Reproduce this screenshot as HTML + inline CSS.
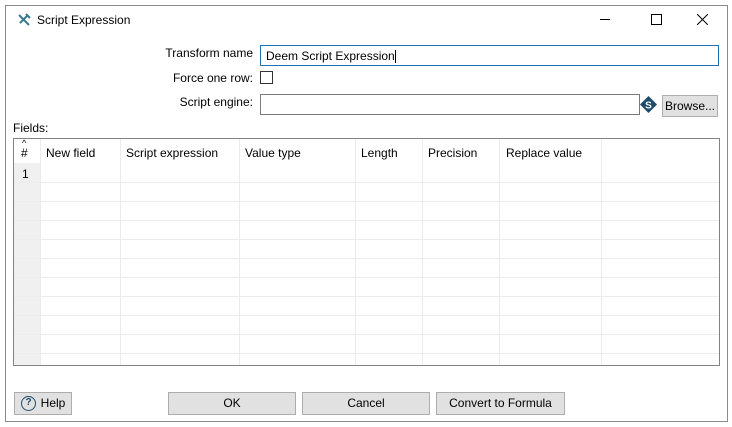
<!DOCTYPE html>
<html><head><style>
*{margin:0;padding:0;box-sizing:border-box}
body{width:732px;height:427px;background:#fff;font-family:"Liberation Sans",sans-serif;font-size:12px;color:#000;position:relative;overflow:hidden}
.a{position:absolute}
.win{left:5px;top:5px;width:723px;height:417px;border:1px solid #8a8a8a;background:#fff}
.lbl{text-align:right;white-space:nowrap}
.btn{background:#e1e1e1;border:1px solid #adadad;text-align:center;line-height:20px;font-size:12px}
.vl{width:1px;background:#ececec}
.hl{height:1px;background:#ececec}
</style></head><body>
<div class="a win"></div>
<svg class="a" style="left:17px;top:13px" width="14" height="14" viewBox="0 0 14 14"><path d="M2 2 L12 12 M11 2 L3 10" stroke="#3a7a8a" stroke-width="2"/><path d="M9 1 L13 5" stroke="#3a7a8a" stroke-width="2"/></svg>
<div class="a" style="left:37px;top:13px;font-size:12px">Script Expression</div>
<div class="a" style="left:600px;top:19px;width:10px;height:1px;background:#000"></div>
<div class="a" style="left:651px;top:14px;width:11px;height:11px;border:1px solid #000"></div>
<svg class="a" style="left:697px;top:14px" width="11" height="11"><path d="M0 0L11 11M11 0L0 11" stroke="#000" stroke-width="1"/></svg>
<div class="a lbl" style="right:479px;top:46px">Transform name</div>
<div class="a" style="left:260px;top:45px;width:459px;height:21px;border:1px solid #1c73b0;padding:3px 5px">Deem Script Expression<span style="display:inline-block;width:1px;height:13px;background:#000;vertical-align:middle"></span></div>
<div class="a lbl" style="right:479px;top:71px">Force one row:</div>
<div class="a" style="left:260px;top:71px;width:13px;height:13px;border:1px solid #333"></div>
<div class="a lbl" style="right:479px;top:95px">Script engine:</div>
<div class="a" style="left:260px;top:94px;width:380px;height:21px;border:1px solid #7a7a7a"></div>
<svg class="a" style="left:640px;top:96px" width="17" height="17" viewBox="0 0 17 17"><path d="M8.5 0L17 8.5L8.5 17L0 8.5Z" fill="#1f4a6a"/><text x="8.5" y="12.5" font-size="10" font-weight="bold" fill="#fff" text-anchor="middle" font-family="Liberation Sans">S</text></svg>
<div class="a btn" style="left:662px;top:95px;width:56px;height:22px">Browse...</div>
<div class="a" style="left:13px;top:121px">Fields:</div>
<div class="a" style="left:13px;top:138px;width:707px;height:228px;border:1px solid #828282;background:#fff;overflow:hidden">
 <div class="a" style="left:0;top:24px;width:26px;height:210px;background:#f0f0f0"></div>
 <div class="a vl" style="left:26px;top:0;height:230px"></div>
 <div class="a vl" style="left:106px;top:0;height:230px"></div>
 <div class="a vl" style="left:225px;top:0;height:230px"></div>
 <div class="a vl" style="left:341px;top:0;height:230px"></div>
 <div class="a vl" style="left:408px;top:0;height:230px"></div>
 <div class="a vl" style="left:485px;top:0;height:230px"></div>
 <div class="a vl" style="left:587px;top:0;height:230px"></div>
 <div class="a hl" style="left:0;top:43px;width:707px"></div>
 <div class="a hl" style="left:0;top:62px;width:707px"></div>
 <div class="a hl" style="left:0;top:81px;width:707px"></div>
 <div class="a hl" style="left:0;top:100px;width:707px"></div>
 <div class="a hl" style="left:0;top:119px;width:707px"></div>
 <div class="a hl" style="left:0;top:138px;width:707px"></div>
 <div class="a hl" style="left:0;top:157px;width:707px"></div>
 <div class="a hl" style="left:0;top:176px;width:707px"></div>
 <div class="a hl" style="left:0;top:195px;width:707px"></div>
 <div class="a hl" style="left:0;top:214px;width:707px"></div>
 <div class="a" style="left:8px;top:-1px;font-size:9px">^</div>
 <div class="a" style="left:7px;top:7px">#</div>
 <div class="a" style="left:32px;top:7px">New field</div>
 <div class="a" style="left:112px;top:7px">Script expression</div>
 <div class="a" style="left:231px;top:7px">Value type</div>
 <div class="a" style="left:347px;top:7px">Length</div>
 <div class="a" style="left:414px;top:7px">Precision</div>
 <div class="a" style="left:492px;top:7px">Replace value</div>
 <div class="a" style="left:8px;top:28px">1</div>
</div>
<div class="a btn" style="left:14px;top:392px;width:58px;height:23px;padding-left:20px">Help</div>
<div class="a" style="left:21px;top:396px;width:15px;height:15px;border:1.5px solid #1f4a6a;border-radius:50%;font-size:10px;text-align:center;line-height:12px;color:#1f4a6a;font-weight:bold">?</div>
<div class="a btn" style="left:168px;top:392px;width:128px;height:23px">OK</div>
<div class="a btn" style="left:302px;top:392px;width:128px;height:23px">Cancel</div>
<div class="a btn" style="left:436px;top:392px;width:129px;height:23px">Convert to Formula</div>
</body></html>
